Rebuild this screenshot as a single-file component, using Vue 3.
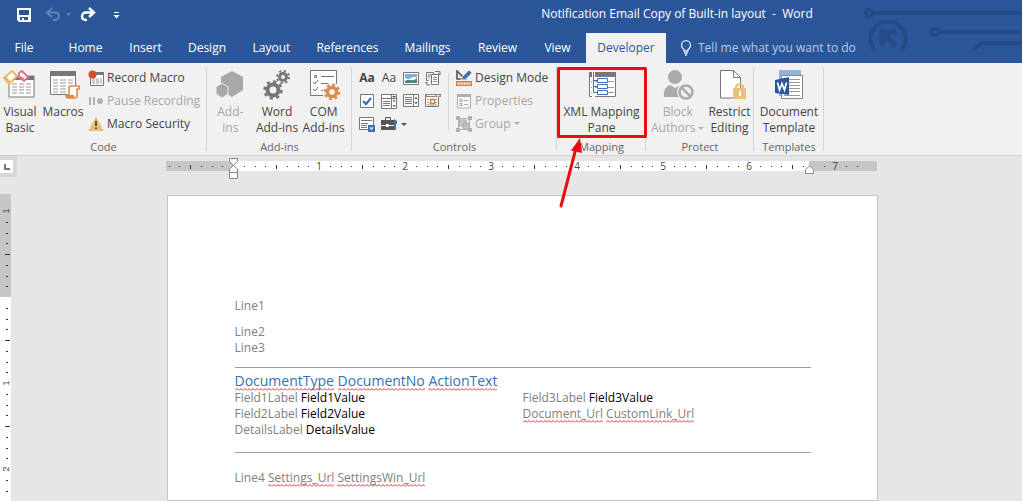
<script setup>
const tabs = ['File', 'Home', 'Insert', 'Design', 'Layout', 'References', 'Mailings', 'Review', 'View', 'Developer']

const INCH = 86
const horizontal = []
for (let i = -6; i <= 58; i++) {
  const at = 67 + (i * INCH) / 8
  if (i === 0 || i === 54) continue
  if (i > 0 && i % 8 === 0) horizontal.push({ at, label: i / 8 })
  else horizontal.push({ at, half: i % 4 === 0 })
}
const vertical = []
for (let i = -8; i <= 20; i++) {
  const at = 103 + (i * INCH) / 8
  if (i === 0) continue
  if (i % 8 === 0) vertical.push({ at, label: Math.abs(i / 8) })
  else vertical.push({ at, half: i % 4 === 0 })
}
</script>

<template>
  <div class="word">
    <header class="top">
      <svg class="circuit" width="170" height="50" viewBox="852 0 170 50" fill="none" stroke="#244b86" aria-hidden="true">
        <circle cx="869" cy="13" r="3.5" stroke-width="3" />
        <path d="M873 13H1022M939 32H1022" stroke-width="4" />
        <circle cx="935" cy="32" r="3.5" stroke-width="3" />
        <circle cx="888" cy="39" r="17.500" stroke-width="4" />
        <path d="M882 46V32H896M883 33L896 46" stroke-width="5" />
        <path d="M973 51L980 45Q982 43 986 43H1022" stroke-width="4" />
      </svg>

      <div class="title-row">
        <div class="quick">
          <button class="q" aria-label="Save">
            <svg width="16" height="16" viewBox="0 0 16 16"><path fill="#fff" fill-rule="evenodd" d="M1 1H15V15H3L1 13ZM3 3V8H13V3ZM4 10V13H6V11H8V13H12V10Z" /></svg>
          </button>
          <button class="q undo" aria-label="Undo">
            <svg width="28" height="16" viewBox="0 0 28 16"><path d="M7 1L2 5.500L7 10M3 5.500H10Q14 5.500 14 9Q14 13 9 13H8" fill="none" stroke="#5f82b8" stroke-width="2" /><path d="M21 6H26L23.500 9Z" fill="#5f82b8" /></svg>
          </button>
          <button class="q" aria-label="Redo">
            <svg width="16" height="16" viewBox="0 0 16 16"><path d="M9 1L14 5.500L9 10M13.500 5.500H6Q2 5.500 2 9.500Q2 13 7 13" fill="none" stroke="#fff" stroke-width="2.400" /></svg>
          </button>
          <button class="q" aria-label="Customize Quick Access Toolbar">
            <svg width="8" height="16" viewBox="0 0 8 16"><path d="M1 5H6V6H1ZM0.500 8H6.500L3.500 11.500Z" fill="#fff" /></svg>
          </button>
        </div>
        <h1 class="title">Notification Email Copy of Built-in layout&nbsp; -&nbsp; Word</h1>
      </div>

      <nav class="tabs">
        <button v-for="t in tabs" :key="t" class="tab" :class="[t.toLowerCase(), { active: t === 'Developer' }]">{{ t }}</button>
        <label class="tell">
          <svg width="12" height="16" viewBox="0 0 12 16" fill="none" stroke="#e6edf7" stroke-width="1.300"><path d="M4 11V9.500Q1.500 7.500 1.500 5.200A4.300 4.300 0 0 1 10.500 5.200Q10.500 7.500 8 9.500V11ZM4 13H8M5 15H7" /></svg>
          <input type="text" placeholder="Tell me what you want to do" aria-label="Tell me what you want to do" />
        </label>
      </nav>
    </header>

    <section class="ribbon">
      <div class="group code">
        <div class="tools">
          <button class="big">
            <svg width="34" height="32" viewBox="0 0 34 32"><path d="M6 8H31V29H6Z" fill="#fff" stroke="#777" /><path d="M6 8H31V12H6Z" fill="#777" /><path d="M9 16H14M16 16H21M23 16H28M9 19H14M16 19H21M23 19H28M9 22H14M16 22H21M23 22H28M9 25H14M16 25H21M23 25H28" stroke="#999" /><path d="M1 10L9 3L14 8L6 16Z" fill="#fff" stroke="#e5b968" stroke-width="2" /><path d="M1 10L6 16L7 13L4 9Z" fill="#e5b968" /><path d="M16 5L19 3L25 9L21 13L16 9Z" fill="#fff" stroke="#dc7893" stroke-width="2" /><path d="M16 7L21 13V10Z" fill="#dc7893" /></svg>
            <span>Visual<br />Basic</span>
          </button>
          <button class="big macros">
            <svg width="34" height="32" viewBox="0 0 34 32"><path d="M4.500 4.500H29.500V26.500H4.500Z" fill="#fff" stroke="#777" /><path d="M4 3H30V8H4Z" fill="#777" /><path d="M7 12H12M14 12H20M22 12H27M7 15H12M14 15H20M22 15H27M7 18H12M14 18H20M7 21H12M14 21H20M7 24H12M14 24H20" stroke="#999" /><path d="M24 18H32Q34 18 33 21H31V28Q31 30 28 30H22Q20 30 20 27H23V20Q23 18 25 18" fill="#fff" stroke="#dc8b4d" stroke-width="1.600" /><path d="M20 27H28V30H22Z" fill="#dc8b4d" /></svg>
            <span>Macros</span>
          </button>
          <div class="stack">
            <button class="small">
              <svg width="16" height="16" viewBox="0 0 16 16"><path d="M3.500 3.500H15.500V15.500H2.500V8" fill="#fff" stroke="#777" /><path d="M8 2H16V5H8Z" fill="#777" /><path d="M4 9H7M8 9H11M12 9H14M4 11H7M8 11H11M12 11H14M4 13H7M8 13H11M12 13H14" stroke="#999" /><circle cx="4.500" cy="4.500" r="4" fill="#d04f31" /></svg>Record Macro
            </button>
            <button class="small off">
              <svg width="16" height="16" viewBox="0 0 16 16" fill="#b1b1b1"><path d="M1 4H3V12H1ZM5 4H7V12H5Z" /><circle cx="12" cy="8" r="3" /></svg>Pause Recording
            </button>
            <button class="small">
              <svg width="16" height="16" viewBox="0 0 16 16"><path d="M8 1.500L15 14.500H1Z" fill="#e8c27a" stroke="#e8c27a" /><path d="M7.200 5H8.800V10H7.200ZM7.200 11.500H8.800V13H7.200Z" fill="#333" /></svg>Macro Security
            </button>
          </div>
        </div>
        <h2>Code</h2>
      </div>

      <div class="group addins">
        <div class="tools">
          <button class="big off">
            <svg width="34" height="32" viewBox="0 0 34 32" fill="#a8a8a8"><path d="M19 3L30 9V22L19 29L8 22V9Z" /><path d="M9 15L15 19V26L9 30L3 26V19Z" stroke="#f1f1f1" /></svg>
            <span>Add-<br />ins</span>
          </button>
          <button class="big">
            <svg width="34" height="32" viewBox="0 0 34 32" fill="none" stroke="#777"><circle cx="13" cy="22" r="5.500" stroke-width="4" /><circle cx="13" cy="22" r="8.500" stroke-width="2.500" stroke-dasharray="3.300 3.370" /><circle cx="23" cy="9" r="3.500" stroke-width="3" /><circle cx="23" cy="9" r="6" stroke-width="2" stroke-dasharray="2.300 2.410" /></svg>
            <span>Word<br />Add-ins</span>
          </button>
          <button class="big">
            <svg width="34" height="32" viewBox="0 0 34 32" fill="none"><path d="M3.500 2.500H29.500V27.500H3.500Z" fill="#fff" stroke="#777" /><path d="M7.500 7.500H9.500V9.500H7.500ZM14 8.500H27M6 14L8 16L11 12M14 15.500H25M6 21L8 23L11 19M14 22.500H19" stroke="#777" /><circle cx="25" cy="24" r="7" stroke="#f1f1f1" stroke-width="5" /><circle cx="25" cy="24" r="4.500" stroke="#dc8b4d" stroke-width="3.500" /><circle cx="25" cy="24" r="7" stroke="#dc8b4d" stroke-width="2.400" stroke-dasharray="2.750 2.750" /></svg>
            <span>COM<br />Add-ins</span>
          </button>
        </div>
        <h2>Add-ins</h2>
      </div>

      <div class="group controls">
        <div class="tools">
          <div class="icons">
            <button class="glyph bold" aria-label="Rich Text Content Control">Aa</button>
            <button class="glyph" aria-label="Plain Text Content Control">Aa</button>
            <button class="glyph" aria-label="Picture Content Control">
              <svg width="16" height="16" viewBox="0 0 16 16"><path d="M.5 2.500H15.500V14.500H.5Z" fill="#fff" stroke="#777" /><path d="M2 4H14V8Q11 6 8 8Q5 10 2 8Z" fill="#7eb2d4" /><path d="M2 13V11Q5 9 8 10Q11 11 14 8V13Z" fill="#438a80" /></svg>
            </button>
            <button class="glyph" aria-label="Building Block Gallery">
              <svg width="16" height="16" viewBox="0 0 16 16" fill="none"><path d="M3.500 10.500H1.500V2.500H8.500V4M3 5H6M3 7H5" stroke="#777" /><path d="M6.500 4.500H13.500V14.500H6.500Z" fill="#fff" stroke="#777" /><path d="M8 7.500H12M8 9.500H12M8 11.500H12" stroke="#dc7b31" /><path d="M10 1.500H15V5M13 3L15 5M2 12V15H5M0 13L2 12" stroke="#777" /></svg>
            </button>
            <button class="glyph" aria-label="Check Box Content Control">
              <svg width="16" height="16" viewBox="0 0 16 16"><path d="M1.500 1.500H14.500V14.500H1.500Z" fill="#fff" stroke="#777" /><path d="M4 8L7 11L12 5" fill="none" stroke="#3f72b5" stroke-width="2.200" /></svg>
            </button>
            <button class="glyph" aria-label="Combo Box Content Control">
              <svg width="16" height="16" viewBox="0 0 16 16"><path d="M.5 1.500H15.500V15.500H.5Z" fill="#fff" stroke="#777" /><path d="M.5 5.500H15.500M10.500 5V15M2 8.500H9M2 10.500H9M2 12.500H9M10.500 1.500V5" stroke="#777" /><path d="M11 3H15L13 5ZM11.500 8.500L13 6.500L14.500 8.500ZM11.500 12L13 14L14.500 12Z" fill="#555" /></svg>
            </button>
            <button class="glyph" aria-label="Drop-Down List Content Control">
              <svg width="16" height="16" viewBox="0 0 16 16"><path d="M.5 1.500H15.500V13.500H.5Z" fill="#fff" stroke="#777" /><path d="M10.500 1V13M2 4.500H9M2 6.500H9M2 8.500H9M2 10.500H9" stroke="#777" /><path d="M11.500 6L13 3.500L14.500 6ZM11.500 9L13 11.500L14.500 9Z" fill="#555" /></svg>
            </button>
            <button class="glyph" aria-label="Date Picker Content Control">
              <svg width="16" height="16" viewBox="0 0 16 16"><path d="M.5 3.500H13.500V13.500H.5Z" fill="#fff" stroke="#777" /><path d="M0 1H16V4H0Z" fill="#888" /><path d="M2 2H10V3H2ZM11 2H15L13 4Z" fill="#fff" /><path d="M2 6.500H4M10 6.500H12M2 9.500H4M10 9.500H12M2 12H12" stroke="#999" /><path d="M5.500 6.500H9.500V10.500H5.500Z" fill="#fff" stroke="#dc7b31" stroke-width="1.500" /></svg>
            </button>
            <button class="glyph" aria-label="Repeating Section Content Control">
              <svg width="16" height="16" viewBox="0 0 16 16"><path d="M.5 1.500H14.500V13.500H.5Z" fill="#fff" stroke="#777" /><path d="M2 4.500H13M2 7.500H9M2 9.500H8M2 11.500H8" stroke="#777" /><path d="M9 9H16V16H9Z" fill="#3f72b5" /><path d="M10.500 11.500H14.500L12.500 14Z" fill="#fff" /></svg>
            </button>
            <button class="glyph wide" aria-label="Legacy Tools">
              <svg width="28" height="16" viewBox="0 0 28 16"><path d="M0 4H13V14H0Z" fill="#555" /><path d="M4.500 4V1.500H9.500V4" fill="none" stroke="#555" /><path d="M0 9H13V10H0Z" fill="#f1f1f1" /><path d="M5 8H8V11H5Z" fill="#fff" /><path d="M13 3L16 5V8H15V14H13Z" fill="#3f72b5" /><path d="M20 7H26L23 10Z" fill="#555" /></svg>
            </button>
          </div>
          <div class="rule"></div>
          <div class="stack">
            <button class="small">
              <svg width="16" height="16" viewBox="0 0 16 16"><path d="M1 1V9H9Z" fill="none" stroke="#555" stroke-width="1.600" /><path d="M5 10L7 6L13 0L16 3L10 9Z" fill="#3f72b5" stroke="#f1f1f1" stroke-width=".7" /><path d="M.7 11.700H15.300V15.300H.7Z" fill="#fff" stroke="#dc7b31" stroke-width="1.400" /><path d="M4 12V14M7 12V14M10 12V14M13 12V14" stroke="#dc7b31" /></svg>Design Mode
            </button>
            <button class="small off">
              <svg width="16" height="16" viewBox="0 0 16 16"><path d="M1.500 1.500H14.500V15H1.500Z" fill="#f7f7f7" stroke="#b1b1b1" /><path d="M1 1H15V4H1Z" fill="#b1b1b1" /><path d="M4 6.500H6V8.500H4ZM4 10.500H6V12.500H4ZM8 7.500H12M8 11.500H12" fill="none" stroke="#aaa" /></svg>Properties
            </button>
            <button class="small off">
              <svg width="16" height="16" viewBox="0 0 16 16"><path d="M2.500 2.500H13.500V13.500H2.500Z" fill="none" stroke="#b1b1b1" /><path d="M3 4H10V10H3ZM7 7H13V13H7Z" fill="#c6c6c6" stroke="#aaa" /><path d="M0 0H4V4H0ZM12 0H16V4H12ZM0 12H4V16H0ZM12 12H16V16H12Z" fill="#b1b1b1" /></svg>Group<i class="caret"></i>
            </button>
          </div>
        </div>
        <h2>Controls</h2>
      </div>

      <div class="group mapping">
        <div class="tools">
          <button class="big">
            <svg width="34" height="32" viewBox="0 -1 34 32"><path d="M4.500 3.500H30.500V27.500H4.500Z" fill="#fff" stroke="#777" /><path d="M4 3H31V8H4Z" fill="#777" /><path d="M6 12.500H29M6 18.500H29M6 23.500H29" stroke="#999" /><path d="M7 3H10V28H7Z" fill="#fff" /><path d="M8.500 3V23.500H13M8.500 11.500H13M8.500 17.500H13" fill="none" stroke="#3f72b5" /><path d="M12.500 9.500H22.500V13.500H12.500ZM12.500 15.500H22.500V19.500H12.500ZM12.500 21.500H22.500V25.500H12.500Z" fill="#fff" stroke="#3f72b5" /></svg>
            <span>XML Mapping<br />Pane</span>
          </button>
        </div>
        <h2>Mapping</h2>
        <svg class="callout" width="92" height="146" viewBox="0 0 92 146" aria-hidden="true">
          <path d="M2.500 5.500H89.500V73.500H2.500Z" fill="none" stroke="#ea0c12" stroke-width="3" stroke-linejoin="round" />
          <path d="M5 143L20 85" stroke="#ea0c12" stroke-width="3" stroke-linecap="round" /><path d="M24 75L15 87.500L26 90Z" fill="#ea0c12" />
        </svg>
      </div>

      <div class="group protect">
        <div class="tools">
          <button class="big off">
            <svg width="34" height="32" viewBox="0 0 34 32"><circle cx="14" cy="9" r="7" fill="#aaa" /><path d="M3 29Q2 19 9 17L14 20L20 17Q24 18 25 22V29Z" fill="#aaa" /><circle cx="25" cy="24" r="7" fill="#f1f1f1" stroke="#f1f1f1" stroke-width="4" /><circle cx="25" cy="24" r="6.500" fill="none" stroke="#aaa" stroke-width="2.500" /><path d="M20.500 19.500L29.500 28.500" stroke="#aaa" stroke-width="2.500" /></svg>
            <span>Block<br />Authors<i class="caret"></i></span>
          </button>
          <button class="big">
            <svg width="34" height="32" viewBox="0 0 34 32"><path d="M8.500 2.500H21.500L28.500 9.500V30H8.500Z" fill="#fff" stroke="#777" /><path d="M21.500 2.500V9.500H28.500" fill="none" stroke="#777" /><path d="M24 21V19Q24 16.500 27.500 16.500Q31 16.500 31 19V21" fill="none" stroke="#e8c27a" stroke-width="2" /><path d="M21 20H34V31H21Z" fill="#e8c27a" /><path d="M27 23H29V28H27Z" fill="#fff" /></svg>
            <span>Restrict<br />Editing</span>
          </button>
        </div>
        <h2>Protect</h2>
      </div>

      <div class="group templates">
        <div class="tools">
          <button class="big">
            <svg width="34" height="32" viewBox="0 0 34 32"><path d="M7.500 2.500H28.500V27.500H7.500Z" fill="#8fb4e3" stroke="#8fb4e3" /><path d="M9.500 7.500H30.500V30.500H9.500Z" fill="#fff" stroke="#888" /><path d="M7 2H28V7H7Z" fill="#8fb4e3" /><path d="M17 11.500H28M17 14.500H28M17 17.500H28M17 20.500H28M17 23.500H28M12 27.500H28" stroke="#9a9a9a" /><path d="M3 12L17 9V27L3 25Z" fill="#2b579a" /><path d="M5.500 14.500L7.500 22L10 15.500L12.500 22L14.500 14.500" fill="none" stroke="#fff" stroke-width="1.700" /></svg>
            <span>Document<br />Template</span>
          </button>
        </div>
        <h2>Templates</h2>
      </div>
    </section>

    <main class="workspace">
      <div class="ruler-row">
        <button class="tabstop" aria-label="Tab stop type"><svg width="8" height="8" viewBox="0 0 8 8"><path d="M2 1V6H7" fill="none" stroke="#777" stroke-width="2" /></svg></button>
        <div class="center">
          <svg class="ruler" width="711" height="22" viewBox="0 0 711 22">
            <path d="M0 4H711V14H0Z" fill="#c6c6c6" /><path d="M67 4H643V14H67Z" fill="#fff" />
            <template v-for="m in horizontal" :key="m.at">
              <text v-if="m.label" :x="m.at" y="13" text-anchor="middle" class="num">{{ m.label }}</text>
              <rect v-else :x="Math.round(m.at)" :y="m.half ? 8 : 9" width="1" :height="m.half ? 4 : 1" fill="#333" />
            </template>
            <g fill="#fff" stroke="#888"><path d="M63.500 1.500H71.500V4L67.500 8.500L71.500 12V15.500H63.500V12L67.500 8.500L63.500 4ZM63.500 15.500H71.500V21.500H63.500Z" /><path d="M639.500 16.500V12.500L643.500 9L647.500 12.500V16.500Z" /></g>
          </svg>
        </div>
      </div>
      <div class="canvas">
        <svg class="vruler" width="11" height="800" viewBox="0 0 11 800">
          <path d="M0 0H11V103H0Z" fill="#c6c6c6" /><path d="M0 103H11V800H0Z" fill="#fff" />
          <template v-for="m in vertical" :key="m.at">
            <text v-if="m.label" class="vnum" text-anchor="middle" :transform="`translate(9 ${m.at}) rotate(-90)`">{{ m.label }}</text>
            <rect v-else :x="m.half ? 5 : 6" :y="Math.round(m.at)" :width="m.half ? 5 : 2" height="1" fill="#333" />
          </template>
        </svg>
        <div class="center">
          <article class="page">
            <p class="gap">Line1</p>
            <p>Line2</p>
            <p>Line3</p>
            <hr />
            <h3><span class="sq">DocumentType</span> <span class="sq">DocumentNo</span> <span class="sq">ActionText</span></h3>
            <div class="fields">
              <div>
                <p>Field1Label <b>Field1Value</b></p>
                <p>Field2Label <b>Field2Value</b></p>
                <p>DetailsLabel <b>DetailsValue</b></p>
              </div>
              <div>
                <p>Field3Label <b>Field3Value</b></p>
                <p><span class="sq">Document_Url</span> <span class="sq">CustomLink_Url</span></p>
              </div>
            </div>
            <hr />
            <p class="last">Line4 <span class="sq">Settings_Url</span> <span class="sq">SettingsWin_Url</span></p>
          </article>
        </div>
      </div>
    </main>
  </div>
</template>

<style>
body {
  margin: 0;
}
</style>

<style scoped>
* {
  box-sizing: border-box;
}
.word {
  display: flex;
  flex-direction: column;
  height: 100vh;
  overflow: hidden;
  background: #e6e6e6;
  color: #444;
  font: 12px/16px "Open Sans", "Noto Sans", sans-serif;
}
button,
input {
  padding: 0;
  border: 0;
  background: none;
  color: inherit;
  font: inherit;
}
svg {
  display: block;
  flex: none;
}
h1,
h2,
h3,
p {
  margin: 0;
  font-weight: 400;
}
.top {
  position: relative;
  flex: none;
  background: #2b579a;
  color: #fff;
}
.circuit {
  position: absolute;
  top: 0;
  right: 0;
}
.title-row {
  position: relative;
  display: flex;
  align-items: center;
  height: 28px;
  margin-bottom: 5px;
}
.quick {
  display: flex;
  gap: 17px;
  width: 122px;
  padding: 2px 0 0 16px;
}
.undo {
  margin: 0 -10px 0 -4px;
}
.title {
  flex: 1;
  padding-left: 210px;
  font-size: 12px;
  text-align: center;
  white-space: nowrap;
}
.tabs {
  position: relative;
  display: grid;
  grid-template-columns: 54px 63px 57px 66px 63px 89px 71px 69px 54px 80px 1fr;
  height: 30px;
}
.file {
  padding-right: 6px;
}
.view {
  padding-right: 3px;
}
.active {
  background: #f1f1f1;
  color: #2b579a;
}
.tell {
  display: flex;
  align-items: center;
  gap: 6px;
  padding-left: 14px;
}
.tell input {
  width: 200px;
  outline: 0;
}
.tell input::placeholder {
  color: #b8c9e4;
  opacity: 1;
}
.ribbon {
  display: flex;
  flex: none;
  height: 93px;
  border-bottom: 1px solid #d2d2d2;
  background: #f1f1f1;
}
.group {
  position: relative;
  display: flex;
  flex: none;
  flex-direction: column;
}
.group::after {
  position: absolute;
  top: 4px;
  right: 0;
  bottom: 4px;
  border-right: 1px solid #d5d5d5;
  content: "";
}
.group h2 {
  color: #666;
  font-size: 11px;
  text-align: center;
}
.tools {
  display: flex;
  height: 76px;
}
.code {
  width: 207px;
}
.addins {
  width: 145px;
}
.controls {
  width: 205px;
}
.mapping {
  width: 89px;
}
.protect {
  width: 108px;
}
.templates {
  width: 70px;
}
.big {
  display: flex;
  flex: 1 0 0;
  flex-direction: column;
  align-items: center;
  gap: 4px;
  padding-top: 5px;
  white-space: nowrap;
}
.code .big {
  flex: none;
  width: 40px;
}
.code .macros {
  width: 46px;
  margin-right: 2px;
}
.protect .big {
  flex: none;
}
.protect .tools {
  gap: 4px;
  padding-left: 5px;
}
.off {
  color: #a6a6a6;
}
.stack {
  display: flex;
  flex-direction: column;
  padding-top: 3px;
}
.small {
  display: flex;
  align-items: center;
  gap: 3px;
  height: 23px;
  white-space: nowrap;
}
.addins .tools {
  padding-right: 5px;
}
.icons {
  display: grid;
  grid-template-columns: repeat(4, 22px);
  grid-auto-rows: 23px;
  padding: 3px 0 0 4px;
}
.glyph {
  display: flex;
  align-items: center;
  justify-content: center;
}
.wide {
  justify-content: flex-start;
  grid-column: span 2;
  padding-left: 3px;
}
.bold {
  font-weight: 700;
}
.rule {
  height: 56px;
  margin: 10px 7px 0 4px;
  border-left: 1px solid #d5d5d5;
}
.caret {
  display: inline-block;
  margin-left: 3px;
  border: 3px solid transparent;
  border-top-color: #b1b1b1;
  border-bottom: 0;
  vertical-align: middle;
}
.small .caret {
  margin-left: 0;
}
.callout {
  position: absolute;
  z-index: 2;
  top: 0;
  left: -1px;
  pointer-events: none;
}
.workspace {
  display: flex;
  flex: 1;
  flex-direction: column;
  min-height: 0;
}
.ruler-row {
  display: flex;
  flex: none;
  height: 38px;
}
.tabstop {
  display: flex;
  align-items: center;
  justify-content: center;
  width: 17px;
  height: 21px;
  border: solid #d8d8d8;
  border-width: 4px 4px 4px 0;
  background: #fff;
}
.center {
  display: flex;
  flex: 1;
  justify-content: center;
}
.ruler-row .center {
  padding: 1px 0 0 4px;
}
.num {
  fill: #444;
  font-size: 10px;
}
.vnum {
  fill: #444;
  font-family: "Liberation Sans", sans-serif;
  font-size: 9px;
}
.canvas {
  display: flex;
  flex: 1;
  min-height: 0;
}
.canvas .center {
  padding: 1px 0 0 11px;
}
.page {
  width: 711px;
  padding: 102px 66px 0 67px;
  border: 1px solid #c6c6c6;
  background: #fff;
  color: #808080;
}
.page p {
  line-height: 16px;
}
.page .gap {
  margin-bottom: 10px;
}
.page hr {
  height: 1px;
  margin: 11px 0 4px;
  border: 0;
  background: #a0a0a0;
}
.page h3 {
  color: #2e74b5;
  font-size: 14px;
  line-height: 18px;
}
.fields {
  display: grid;
  grid-template-columns: 1fr 1fr;
  padding-bottom: 3px;
}
.fields b {
  color: #000;
  font-weight: 400;
}
.sq {
  padding-bottom: 1px;
  background: url("data:image/svg+xml,%3Csvg xmlns='http://www.w3.org/2000/svg' width='4' height='3'%3E%3Cpath d='M0 2.500L2 .5L4 2.500' fill='none' stroke='%23e03030'/%3E%3C/svg%3E") 0 100% repeat-x;
}
.page .last {
  margin-top: 17px;
}
</style>
